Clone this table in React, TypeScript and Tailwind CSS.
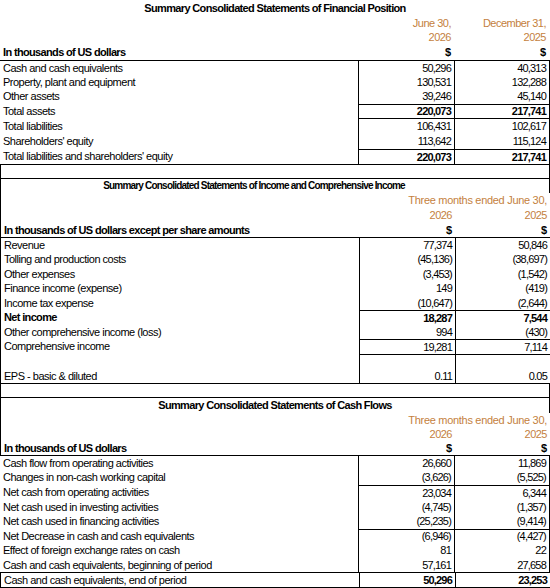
import React from 'react';

const cols = 'grid grid-cols-[358px_96px_96px]';
const orange = 'text-[#c47f40]';

type RowProps = {
  h: string;
  label?: string;
  b?: string;
  c?: string;
  bold?: boolean;
  boldLabel?: boolean;
  rule?: boolean;
  box?: string;
};

// one line of figures with the two boxed value columns
function Row({ h, label, b, c, bold, boldLabel, rule, box = '' }: RowProps) {
  const val = `flex items-center justify-end pr-[3px] border-l border-black tracking-[-0.8px] ${
    bold ? 'font-bold' : ''
  } ${rule ? 'border-t' : ''}`;
  return (
    <div className={`${cols} ${h} ${box}`}>
      <div
        className={`flex items-center pl-[3px] whitespace-nowrap ${
          boldLabel ? 'font-bold tracking-[-0.65px]' : 'tracking-[-0.5px]'
        }`}
      >
        {label}
      </div>
      <div className={val}>{b}</div>
      <div className={`${val} border-r`}>{c}</div>
    </div>
  );
}

function Title({ h, text, box = '' }: { h: string; text: string; box?: string }) {
  return (
    <div className={`flex items-center justify-center font-bold whitespace-nowrap ${h} ${box}`}>
      {text}
    </div>
  );
}

function Dollars({ h, label, box = '' }: { h: string; label: string; box?: string }) {
  return (
    <div className={`${cols} ${h} border-b border-black font-bold ${box}`}>
      <div className="flex items-center pl-[3px] tracking-[-0.65px] whitespace-nowrap">{label}</div>
      <div className="flex items-center justify-end pr-[3px]">$</div>
      <div className="flex items-center justify-end pr-[4px]">$</div>
    </div>
  );
}

function Months({ h, box = '' }: { h: string; box?: string }) {
  return (
    <div className={`${cols} ${h} ${orange} ${box}`}>
      <div />
      <div className="col-span-2 flex items-center justify-end pr-[4px] tracking-[-0.3px] whitespace-nowrap">
        Three months ended June 30,
      </div>
    </div>
  );
}

function Years({ h, box = '' }: { h: string; box?: string }) {
  return (
    <div className={`${cols} ${h} ${orange} tracking-[-0.5px] ${box}`}>
      <div />
      <div className="flex items-center justify-end pr-[3px]">2026</div>
      <div className="flex items-center justify-end pr-[4px]">2025</div>
    </div>
  );
}

export default function App() {
  return (
    <div className="w-[550px] h-[588px] bg-white text-black text-[11px] leading-none font-['Liberation_Sans',Arial,sans-serif] overflow-hidden">
      {/* Financial position */}
      <Title
        h="h-[16px] tracking-[-0.65px]"
        text="Summary Consolidated Statements of Financial Position"
      />
      <div className={`${cols} h-[14px] ${orange} tracking-[-0.5px]`}>
        <div />
        <div className="flex items-center justify-end pr-[3px]">June 30,</div>
        <div className="flex items-center justify-end pr-[4px]">December 31,</div>
      </div>
      <Years h="h-[15px]" />
      <Dollars h="h-[16px]" label="In thousands of US dollars" />
      <Row h="h-[14px]" label="Cash and cash equivalents" b="50,296" c="40,313" />
      <Row h="h-[14px]" label="Property, plant and equipment" b="130,531" c="132,288" />
      <Row h="h-[15px]" label="Other assets" b="39,246" c="45,140" />
      <Row h="h-[14px]" label="Total assets" b="220,073" c="217,741" bold rule />
      <Row h="h-[16px]" label="Total liabilities" b="106,431" c="102,617" rule />
      <Row h="h-[15px]" label="Shareholders' equity" b="113,642" c="115,124" />
      <Row h="h-[15px]" label="Total liabilities and shareholders' equity" b="220,073" c="217,741" bold rule />
      <div className="h-[15px] border border-black" />

      {/* Income and comprehensive income */}
      <Title
        h="h-[14px] text-[10px] tracking-[-0.8px]"
        text="Summary Consolidated Statements of Income and Comprehensive Income"
        box="border-x border-black pr-[42px]"
      />
      <Months h="h-[15px]" box="border-l border-black" />
      <Years h="h-[15px]" box="border-l border-black" />
      <Dollars h="h-[15px]" label="In thousands of US dollars except per share amounts" box="border-l" />
      <Row h="h-[14px]" label="Revenue" b="77,374" c="50,846" box="border-l border-black" />
      <Row h="h-[15px]" label="Tolling and production costs" b="(45,136)" c="(38,697)" box="border-l border-black" />
      <Row h="h-[14px]" label="Other expenses" b="(3,453)" c="(1,542)" box="border-l border-black" />
      <Row h="h-[15px]" label="Finance income (expense)" b="149" c="(419)" box="border-l border-black" />
      <Row h="h-[14px]" label="Income tax expense" b="(10,647)" c="(2,644)" box="border-l border-black" />
      <Row h="h-[15px]" label="Net income" b="18,287" c="7,544" bold boldLabel rule box="border-l border-black" />
      <Row h="h-[14px]" label="Other comprehensive income (loss)" b="994" c="(430)" box="border-l border-black" />
      <Row h="h-[15px]" label="Comprehensive income" b="19,281" c="7,114" rule box="border-l border-black" />
      <Row h="h-[15px]" rule box="border-l border-black" />
      <Row h="h-[15px]" label="EPS - basic & diluted" b="0.11" c="0.05" box="border-l border-b border-black" />
      <div className="h-[14px] border-x border-b border-black" />

      {/* Cash flows */}
      <Title
        h="h-[15px] tracking-[-0.65px]"
        text="Summary Consolidated Statements of Cash Flows"
        box="border-x border-black"
      />
      <Months h="h-[14px]" box="border-l border-black" />
      <Years h="h-[14px]" box="border-l border-black" />
      <Dollars h="h-[15px]" label="In thousands of US dollars" box="border-l" />
      <Row h="h-[14px]" label="Cash flow from operating activities" b="26,660" c="11,869" />
      <Row h="h-[15px]" label="Changes in non-cash working capital" b="(3,626)" c="(5,525)" />
      <Row h="h-[15px]" label="Net cash from operating activities" b="23,034" c="6,344" rule />
      <Row h="h-[14px]" label="Net cash used in investing activities" b="(4,745)" c="(1,357)" />
      <Row h="h-[15px]" label="Net cash used in financing activities" b="(25,235)" c="(9,414)" />
      <Row h="h-[14px]" label="Net Decrease in cash and cash equivalents" b="(6,946)" c="(4,427)" rule />
      <Row h="h-[15px]" label="Effect of foreign exchange rates on cash" b="81" c="22" />
      <Row h="h-[14px]" label="Cash and cash equivalents, beginning of period" b="57,161" c="27,658" />
      <Row
        h="h-[16px]"
        label="Cash and cash equivalents, end of period"
        b="50,296"
        c="23,253"
        bold
        box="border-l border-y border-black"
      />
    </div>
  );
}
